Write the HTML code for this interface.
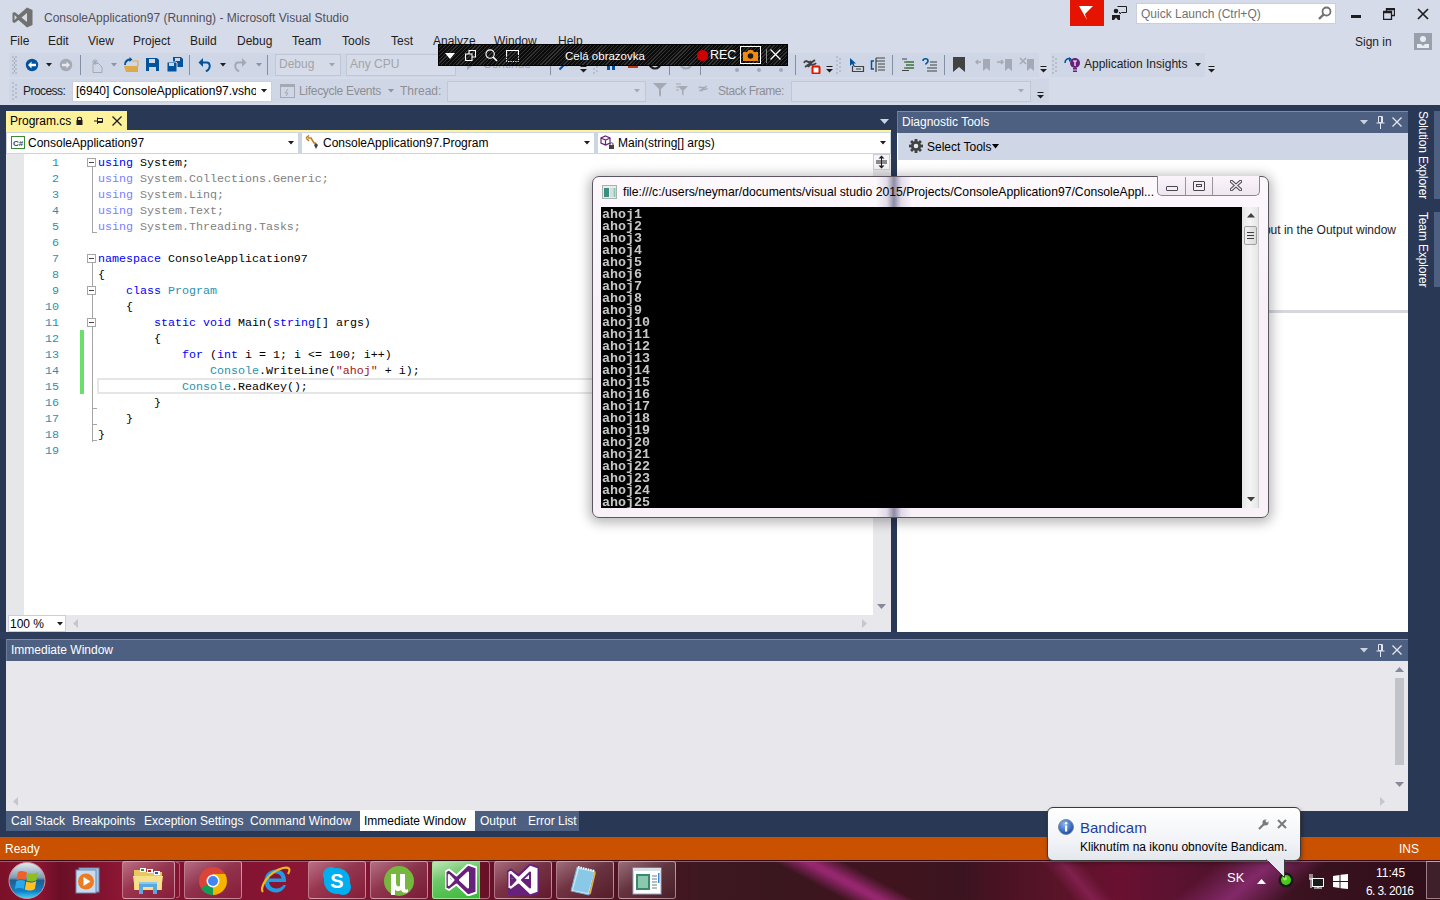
<!DOCTYPE html>
<html><head><meta charset="utf-8">
<style>
*{box-sizing:border-box;margin:0;padding:0}
html,body{width:1440px;height:900px;overflow:hidden;background:#293955;font-family:"Liberation Sans",sans-serif;font-size:12px;color:#1E1E1E;position:relative}
.a{position:absolute}
.t{position:absolute;white-space:pre;line-height:14px}
.m{position:absolute;white-space:pre;font-family:"Liberation Mono",monospace;font-size:11.67px;line-height:16px}
</style></head><body>


<!-- TOP CHROME -->
<div class="a" style="left:0;top:0;width:1440px;height:105px;background:#D6DBE9"></div>
<svg class="a" style="left:12px;top:7px" width="21" height="21" viewBox="0 0 21 21"><path fill="#717171" fill-rule="evenodd" d="M15 0.5 L20.5 3 V18 L15 20.5 L6.5 13 L2.5 16 L0.5 15 V6 L2.5 5 L6.5 8 Z M2.5 8 V13 L5 10.5 Z M15 6 V15 L9.5 10.5 Z"/></svg>
<div class="t" style="left:44px;top:11px;color:#50505C">ConsoleApplication97 (Running) - Microsoft Visual Studio</div>
<!-- red flag -->
<div class="a" style="left:1070px;top:0;width:34px;height:26px;background:#E51400"></div>
<svg class="a" style="left:1079px;top:6px" width="16" height="15" viewBox="0 0 16 15"><path fill="#fff" d="M0 0 H14 L6 8 L8 14 Z"/></svg>
<!-- feedback -->
<svg class="a" style="left:1112px;top:5px" width="16" height="16" viewBox="0 0 16 16"><circle cx="4" cy="6" r="2.3" fill="#1E1E1E"/><path d="M0 15 V10 H8 V15 H6 L4 12.5 L2 15Z" fill="#1E1E1E"/><path d="M5.5 1.5 H14.5 V7.5 H9.5 L8 9 V7.5 H7" fill="none" stroke="#1E1E1E" stroke-width="1"/></svg>
<!-- quick launch -->
<div class="a" style="left:1136px;top:3px;width:200px;height:21px;background:#fff;border:1px solid #CCCEDB"></div>
<div class="t" style="left:1141px;top:7px;color:#717171">Quick Launch (Ctrl+Q)</div>
<svg class="a" style="left:1318px;top:6px" width="14" height="14" viewBox="0 0 14 14"><circle cx="8.5" cy="5.5" r="4" fill="none" stroke="#717171" stroke-width="1.8"/><path d="M5.5 8.5 L1 13" stroke="#717171" stroke-width="2.4"/></svg>
<!-- window buttons -->
<div class="a" style="left:1351px;top:15px;width:10px;height:3px;background:#1E1E1E"></div>
<svg class="a" style="left:1383px;top:8px" width="12" height="12" viewBox="0 0 12 12"><path d="M3.5 3.5 V0.5 H11.5 V7.5 H8.5 M0.5 3.5 H8.5 V11.5 H0.5 Z M3.5 1.5 H11 M0.5 4.5 H8.5" fill="none" stroke="#1E1E1E" stroke-width="1.3"/></svg>
<svg class="a" style="left:1417px;top:8px" width="12" height="12" viewBox="0 0 12 12"><path d="M1 1 L11 11 M11 1 L1 11" stroke="#1E1E1E" stroke-width="1.7"/></svg>
<div class="t" style="left:1355px;top:35px;color:#1E1E1E">Sign in</div>
<div class="a" style="left:1414px;top:33px;width:18px;height:17px;background:#98A0AC"></div>
<svg class="a" style="left:1414px;top:33px" width="18" height="17" viewBox="0 0 18 17"><circle cx="9" cy="6" r="3" fill="#E9ECF2"/><path d="M3 15 V11 H7 L9 13 L11 11 H15 V15Z" fill="#E9ECF2"/></svg>
<!-- menu -->
<div class="t" style="left:10px;top:34px">File</div>
<div class="t" style="left:48px;top:34px">Edit</div>
<div class="t" style="left:88px;top:34px">View</div>
<div class="t" style="left:133px;top:34px">Project</div>
<div class="t" style="left:190px;top:34px">Build</div>
<div class="t" style="left:237px;top:34px">Debug</div>
<div class="t" style="left:292px;top:34px">Team</div>
<div class="t" style="left:342px;top:34px">Tools</div>
<div class="t" style="left:391px;top:34px">Test</div>
<div class="t" style="left:433px;top:34px">Analyze</div>
<div class="t" style="left:494px;top:34px">Window</div>
<div class="t" style="left:558px;top:34px">Help</div>
<!-- toolbar row 1 -->
<div class="a" style="left:9px;top:53px;width:1030px;height:24px;background:#CFD6E5"></div>
<div class="a" style="left:1051px;top:53px;width:154px;height:24px;background:#CFD6E5"></div>
<!-- toolbar row 2 -->
<div class="a" style="left:9px;top:79px;width:1040px;height:24px;background:#CFD6E5"></div>

<svg class="a" style="left:12px;top:56px" width="6" height="18"><g fill="#8D93A3"><circle cx="1" cy="1" r=".7"/><circle cx="4" cy="1" r=".7"/><circle cx="2.5" cy="3" r=".7"/><circle cx="1" cy="5" r=".7"/><circle cx="4" cy="5" r=".7"/><circle cx="2.5" cy="7" r=".7"/><circle cx="1" cy="9" r=".7"/><circle cx="4" cy="9" r=".7"/><circle cx="2.5" cy="11" r=".7"/><circle cx="1" cy="13" r=".7"/><circle cx="4" cy="13" r=".7"/><circle cx="2.5" cy="15" r=".7"/><circle cx="1" cy="17" r=".7"/><circle cx="4" cy="17" r=".7"/></g></svg>
<svg class="a" style="left:25px;top:58px" width="14" height="14" viewBox="0 0 14 14"><circle cx="7" cy="7" r="6.2" fill="#00539C"/><path d="M3 7 L6.5 3.5 V5.8 H11 V8.2 H6.5 V10.5Z" fill="#fff"/></svg>
<svg class="a" style="left:46px;top:63px" width="6" height="4"><path d="M0 0H6L3 3.5Z" fill="#1E1E1E"/></svg>
<svg class="a" style="left:59px;top:58px" width="14" height="14" viewBox="0 0 14 14"><circle cx="7" cy="7" r="6.2" fill="#A5A9B3"/><path d="M11 7 L7.5 3.5 V5.8 H3 V8.2 H7.5 V10.5Z" fill="#E6E8EE"/></svg>
<div class="a" style="left:80px;top:55px;width:1px;height:20px;background:#8591A2"></div>
<svg class="a" style="left:90px;top:57px" width="14" height="16" viewBox="0 0 14 16"><path d="M3 6.5 H8.5 L12 10 V15.5 H3Z M5 8 V2 M2 5 H8 M3 3 L7 7 M7 3 L3 7" fill="none" stroke="#A5A9B3" stroke-width="1"/></svg>
<svg class="a" style="left:111px;top:63px" width="6" height="4"><path d="M0 0H6L3 3.5Z" fill="#8D93A3"/></svg>
<svg class="a" style="left:123px;top:57px" width="16" height="16" viewBox="0 0 16 16"><path d="M1 9 H15 V15 H3 Z" fill="#DCA94B"/><path d="M9 4 H15 V9" fill="none" stroke="#DCA94B" stroke-width="1.2"/><path d="M2 8 C2 4 4 2.5 8 2.5" fill="none" stroke="#00539C" stroke-width="1.8"/><path d="M6.5 0 L9.5 2.5 L6.5 5Z" fill="#00539C"/></svg>
<svg class="a" style="left:146px;top:58px" width="13" height="13" viewBox="0 0 13 13"><path d="M0 0 H11 L13 2 V13 H0Z" fill="#00539C"/><rect x="3" y="1" width="6" height="4" fill="#CFD6E5"/><rect x="3" y="9" width="7" height="4" fill="#CFD6E5"/></svg>
<svg class="a" style="left:167px;top:57px" width="16" height="15" viewBox="0 0 16 15"><path d="M6 0 H14 L16 2 V10 H6Z" fill="#00539C"/><rect x="8" y="1" width="5" height="3" fill="#CFD6E5"/><path d="M0 5 H9 L10 6 V15 H0Z" fill="#00539C" stroke="#CFD6E5" stroke-width="1"/><rect x="2" y="6" width="5" height="3" fill="#CFD6E5"/></svg>
<div class="a" style="left:189px;top:55px;width:1px;height:20px;background:#8591A2"></div>
<svg class="a" style="left:198px;top:57px" width="14" height="15" viewBox="0 0 14 15"><path d="M4.5 5.5 H9 C12 5.5 12.5 10 10.5 12.5 L8 14.5" fill="none" stroke="#00539C" stroke-width="2"/><path d="M0.5 5.5 L5 1 V10Z" fill="#00539C"/></svg>
<svg class="a" style="left:220px;top:63px" width="6" height="4"><path d="M0 0H6L3 3.5Z" fill="#1E1E1E"/></svg>
<svg class="a" style="left:233px;top:57px" width="14" height="15" viewBox="0 0 14 15"><path d="M9.5 5.5 H5 C2 5.5 1.5 10 3.5 12.5 L6 14.5" fill="none" stroke="#A5A9B3" stroke-width="2"/><path d="M13.5 5.5 L9 1 V10Z" fill="#A5A9B3"/></svg>
<svg class="a" style="left:256px;top:63px" width="6" height="4"><path d="M0 0H6L3 3.5Z" fill="#8D93A3"/></svg>
<div class="a" style="left:267px;top:55px;width:1px;height:20px;background:#8591A2"></div>
<div class="a" style="left:275px;top:54px;width:66px;height:22px;border:1px solid #C0C7D5;background:#D6DBE9"></div>
<div class="t" style="left:279px;top:57px;color:#A2A4A5">Debug</div>
<svg class="a" style="left:329px;top:63px" width="6" height="4"><path d="M0 0H6L3 3.5Z" fill="#A2A4A5"/></svg>
<div class="a" style="left:346px;top:54px;width:110px;height:22px;border:1px solid #C0C7D5;background:#D6DBE9"></div>
<div class="t" style="left:350px;top:57px;color:#A2A4A5">Any CPU</div>


<!-- continue (partially hidden) -->
<svg class="a" style="left:466px;top:57px" width="10" height="14"><path d="M1 1 L9 7 L1 13Z" fill="#A5A9B3"/></svg>
<div class="t" style="left:483px;top:57px;color:#A2A4A5">Continue</div>
<svg class="a" style="left:538px;top:63px" width="6" height="4"><path d="M0 0H6L3 3.5Z" fill="#A2A4A5"/></svg>
<div class="a" style="left:550px;top:55px;width:1px;height:20px;background:#8591A2"></div>
<svg class="a" style="left:558px;top:57px" width="16" height="14" viewBox="0 0 16 14"><circle cx="9" cy="5" r="3.5" fill="none" stroke="#00539C" stroke-width="1.5"/><path d="M6.5 7.5 L1.5 12.5" stroke="#00539C" stroke-width="2"/><rect x="11" y="4" width="5" height="2" fill="#DCA94B"/></svg>
<svg class="a" style="left:580px;top:66px" width="7" height="7"><rect x="0.5" y="0" width="6" height="1" fill="#1E1E1E"/><path d="M0 3H7L3.5 6.5Z" fill="#1E1E1E"/></svg>
<svg class="a" style="left:593px;top:56px" width="6" height="18"><g fill="#8D93A3"><circle cx="1" cy="1" r=".7"/><circle cx="4" cy="3" r=".7"/><circle cx="1" cy="5" r=".7"/><circle cx="4" cy="7" r=".7"/><circle cx="1" cy="9" r=".7"/><circle cx="4" cy="11" r=".7"/><circle cx="1" cy="13" r=".7"/><circle cx="4" cy="15" r=".7"/><circle cx="1" cy="17" r=".7"/></g></svg>
<div class="a" style="left:607px;top:58px;width:3px;height:12px;background:#00539C"></div>
<div class="a" style="left:612px;top:58px;width:3px;height:12px;background:#00539C"></div>
<div class="a" style="left:628px;top:58px;width:10px;height:10px;background:#C1341F"></div>
<svg class="a" style="left:648px;top:56px" width="14" height="14"><circle cx="7" cy="7" r="5.5" fill="none" stroke="#1E1E1E" stroke-width="2.2"/></svg>
<div class="a" style="left:669px;top:55px;width:1px;height:20px;background:#8591A2"></div>
<svg class="a" style="left:679px;top:56px" width="14" height="14"><circle cx="7" cy="7" r="5.5" fill="none" stroke="#A5A9B3" stroke-width="2.2"/></svg>
<div class="a" style="left:700px;top:55px;width:1px;height:20px;background:#8591A2"></div>
<div class="a" style="left:735px;top:68px;width:4px;height:4px;border-radius:2px;background:#A5A9B3"></div>
<div class="a" style="left:757px;top:68px;width:4px;height:4px;border-radius:2px;background:#A5A9B3"></div>
<div class="a" style="left:779px;top:68px;width:4px;height:4px;border-radius:2px;background:#A5A9B3"></div>
<div class="a" style="left:795px;top:55px;width:1px;height:20px;background:#8591A2"></div>
<svg class="a" style="left:803px;top:57px" width="18" height="17" viewBox="0 0 18 17"><path d="M1 6 C3 1 6 8 8 4 M2 10 L12 3 M5 10 C8 5 10 10 13 6" fill="none" stroke="#424242" stroke-width="2"/><rect x="9.5" y="9.5" width="7" height="7" rx="1" fill="#fff" stroke="#E51400" stroke-width="2"/></svg>
<svg class="a" style="left:826px;top:66px" width="7" height="7"><rect x="0.5" y="0" width="6" height="1" fill="#1E1E1E"/><path d="M0 3H7L3.5 6.5Z" fill="#1E1E1E"/></svg>
<svg class="a" style="left:836px;top:56px" width="6" height="18"><g fill="#8D93A3"><circle cx="1" cy="1" r=".7"/><circle cx="4" cy="3" r=".7"/><circle cx="1" cy="5" r=".7"/><circle cx="4" cy="7" r=".7"/><circle cx="1" cy="9" r=".7"/><circle cx="4" cy="11" r=".7"/><circle cx="1" cy="13" r=".7"/><circle cx="4" cy="15" r=".7"/><circle cx="1" cy="17" r=".7"/></g></svg>
<svg class="a" style="left:849px;top:57px" width="16" height="16" viewBox="0 0 16 16"><path d="M1 1 V9 L3 7 L5 10 L6 9.5 L4.5 6.5 H7Z" fill="#00539C"/><path d="M5.5 9.5 H14.5 V14.5 H3.5 V9" fill="none" stroke="#424242" stroke-width="1.2"/><rect x="7" y="11.5" width="5" height="1" fill="#424242"/></svg>
<svg class="a" style="left:870px;top:57px" width="16" height="16" viewBox="0 0 16 16"><path d="M4 4 H1.5 V12 H4" fill="none" stroke="#00539C" stroke-width="1.5"/><path d="M6 1 H15 M6 4 H15 M8 7 H15 M8 10 H15 M8 13 H15 M6 1 V15" stroke="#424242" stroke-width="1.2"/></svg>
<div class="a" style="left:892px;top:55px;width:1px;height:20px;background:#8591A2"></div>
<svg class="a" style="left:901px;top:58px" width="14" height="13" viewBox="0 0 14 13"><path d="M1 1 H6 M3 4 H13 M5 7 H13 M3 10 H13 M1 12.5 H8" stroke="#424242" stroke-width="1.2"/><path d="M5 4 H13 M5 7 H13 M5 10 H13" stroke="#388A34" stroke-width="1.2"/></svg>
<svg class="a" style="left:922px;top:57px" width="16" height="15" viewBox="0 0 16 15"><path d="M1 4 C1 1 6 1 6 4 C6 6 4 6 3.5 7.5" fill="none" stroke="#00539C" stroke-width="1.6"/><path d="M8 5 H15 M8 8 H15 M5 11 H15 M5 14 H15" stroke="#424242" stroke-width="1.2"/></svg>
<div class="a" style="left:944px;top:55px;width:1px;height:20px;background:#8591A2"></div>
<svg class="a" style="left:953px;top:57px" width="12" height="15"><path d="M0 0 H12 V15 L6 10 L0 15Z" fill="#424242"/></svg>
<svg class="a" style="left:975px;top:57px" width="16" height="15"><path d="M8 2 H15 V14 L11.5 11 L8 14Z" fill="#A5A9B3"/><path d="M1 5 H6 M3 3 L1 5 L3 7" fill="none" stroke="#A5A9B3" stroke-width="1.5"/></svg>
<svg class="a" style="left:997px;top:57px" width="16" height="15"><path d="M8 2 H15 V14 L11.5 11 L8 14Z" fill="#A5A9B3"/><path d="M0 5 H6 M4 3 L6 5 L4 7" fill="none" stroke="#A5A9B3" stroke-width="1.5"/></svg>
<svg class="a" style="left:1019px;top:57px" width="16" height="15"><path d="M8 2 H15 V14 L11.5 11 L8 14Z" fill="#A5A9B3"/><path d="M1 1 L7 7 M7 1 L1 7" fill="none" stroke="#A5A9B3" stroke-width="1.5"/></svg>
<svg class="a" style="left:1040px;top:66px" width="7" height="7"><rect x="0.5" y="0" width="6" height="1" fill="#1E1E1E"/><path d="M0 3H7L3.5 6.5Z" fill="#1E1E1E"/></svg>
<svg class="a" style="left:1052px;top:56px" width="6" height="18"><g fill="#8D93A3"><circle cx="1" cy="1" r=".7"/><circle cx="4" cy="3" r=".7"/><circle cx="1" cy="5" r=".7"/><circle cx="4" cy="7" r=".7"/><circle cx="1" cy="9" r=".7"/><circle cx="4" cy="11" r=".7"/><circle cx="1" cy="13" r=".7"/><circle cx="4" cy="15" r=".7"/><circle cx="1" cy="17" r=".7"/></g></svg>
<svg class="a" style="left:1064px;top:57px" width="17" height="16" viewBox="0 0 17 16"><path d="M1 6 C1 2 4 1 7 2" fill="none" stroke="#00539C" stroke-width="1.6"/><path d="M5 0 L8 2.5 L5 5Z" fill="#00539C"/><circle cx="11" cy="6" r="5" fill="#68217A"/><rect x="9" y="11" width="4" height="1.5" fill="#68217A"/><rect x="9" y="13.5" width="4" height="1.5" fill="#68217A"/><path d="M9 4 H13 M11 4 V9" stroke="#fff" stroke-width="1.2"/></svg>
<div class="t" style="left:1084px;top:57px">Application Insights</div>
<svg class="a" style="left:1195px;top:63px" width="6" height="4"><path d="M0 0H6L3 3.5Z" fill="#1E1E1E"/></svg>
<svg class="a" style="left:1208px;top:66px" width="7" height="7"><rect x="0.5" y="0" width="6" height="1" fill="#1E1E1E"/><path d="M0 3H7L3.5 6.5Z" fill="#1E1E1E"/></svg>

<svg class="a" style="left:12px;top:82px" width="6" height="18"><g fill="#8D93A3"><circle cx="1" cy="1" r=".7"/><circle cx="4" cy="3" r=".7"/><circle cx="1" cy="5" r=".7"/><circle cx="4" cy="7" r=".7"/><circle cx="1" cy="9" r=".7"/><circle cx="4" cy="11" r=".7"/><circle cx="1" cy="13" r=".7"/><circle cx="4" cy="15" r=".7"/><circle cx="1" cy="17" r=".7"/></g></svg>
<div class="t" style="left:23px;top:84px;letter-spacing:-0.55px">Process:</div>
<div class="a" style="left:72px;top:81px;width:200px;height:21px;background:#fff;border:1px solid #CCCEDB"></div>
<div class="t" style="left:76px;top:84px;color:#000">[6940] ConsoleApplication97.vsho</div>
<div class="a" style="left:256px;top:82px;width:15px;height:19px;background:#fff"></div>
<svg class="a" style="left:261px;top:89px" width="6" height="4"><path d="M0 0H6L3 3.5Z" fill="#1E1E1E"/></svg>
<svg class="a" style="left:280px;top:84px" width="15" height="14" viewBox="0 0 15 14"><rect x="0.5" y="0.5" width="14" height="13" fill="none" stroke="#A5A9B3"/><rect x="0.5" y="0.5" width="14" height="2.5" fill="#A5A9B3"/><path d="M8 5 L5 9 H8 L6 12" fill="none" stroke="#A5A9B3" stroke-width="1"/></svg>
<div class="t" style="left:299px;top:84px;color:#8D8F96;letter-spacing:-0.3px">Lifecycle Events</div>
<svg class="a" style="left:388px;top:89px" width="6" height="4"><path d="M0 0H6L3 3.5Z" fill="#8D93A3"/></svg>
<div class="t" style="left:400px;top:84px;color:#8D8F96">Thread:</div>
<div class="a" style="left:447px;top:81px;width:199px;height:21px;border:1px solid #C0C7D5;background:#D6DBE9"></div>
<svg class="a" style="left:634px;top:89px" width="6" height="4"><path d="M0 0H6L3 3.5Z" fill="#A5A9B3"/></svg>
<svg class="a" style="left:653px;top:83px" width="14" height="15"><path d="M0 0 H14 L8 6 V14 L6 12 V6Z" fill="#A5A9B3"/></svg>
<svg class="a" style="left:675px;top:83px" width="14" height="15"><path d="M3 3 H13 L8.5 7.5 V13 L7 11 V7.5Z" fill="#A5A9B3"/><path d="M1 1 H6 M1 4 H4 M1 7 H4" stroke="#A5A9B3" stroke-width="1.2"/></svg>
<svg class="a" style="left:697px;top:84px" width="15" height="12" viewBox="0 0 18 17"><path d="M1 6 C3 1 6 8 8 4 M2 10 L12 3 M5 10 C8 5 10 10 13 6" fill="none" stroke="#A5A9B3" stroke-width="2"/></svg>
<div class="t" style="left:718px;top:84px;color:#8D8F96;letter-spacing:-0.45px">Stack Frame:</div>
<div class="a" style="left:791px;top:81px;width:240px;height:21px;border:1px solid #C0C7D5;background:#D6DBE9"></div>
<svg class="a" style="left:1018px;top:89px" width="6" height="4"><path d="M0 0H6L3 3.5Z" fill="#A5A9B3"/></svg>
<svg class="a" style="left:1037px;top:92px" width="7" height="7"><rect x="0.5" y="0" width="6" height="1" fill="#1E1E1E"/><path d="M0 3H7L3.5 6.5Z" fill="#1E1E1E"/></svg>

<div class="a" style="left:6px;top:111px;width:121px;height:21px;background:#FFF29D"></div>
<div class="a" style="left:6px;top:130px;width:885px;height:2px;background:#FFF29D"></div>
<div class="t" style="left:10px;top:114px;color:#000">Program.cs</div>
<svg class="a" style="left:76px;top:116px" width="7" height="9" viewBox="0 0 7 9"><path d="M1.5 4 V2.5 C1.5 0.8 5.5 0.8 5.5 2.5 V4" fill="none" stroke="#1E1E1E" stroke-width="1.2"/><rect x="0.5" y="4" width="6" height="5" fill="#1E1E1E"/></svg>
<svg class="a" style="left:94px;top:116px" width="9" height="9" viewBox="0 0 9 9"><path d="M0 5 H3 M3.5 1.5 V8 M3.5 2.5 H8.5 V6.5 H3.5 M3.5 5.5 H8.5" fill="none" stroke="#1E1E1E" stroke-width="1"/></svg>
<svg class="a" style="left:112px;top:116px" width="10" height="10" viewBox="0 0 10 10"><path d="M0.5 0.5 L9.5 9.5 M9.5 0.5 L0.5 9.5" stroke="#1E1E1E" stroke-width="1.3"/></svg>
<svg class="a" style="left:880px;top:119px" width="9" height="5"><path d="M0 0H9L4.5 5Z" fill="#CED4DD"/></svg>
<div class="a" style="left:6px;top:132px;width:885px;height:22px;background:#CCD5E4"></div>
<div class="a" style="left:7px;top:133px;width:291px;height:20px;background:#fff"></div>
<div class="a" style="left:302px;top:133px;width:292px;height:20px;background:#fff"></div>
<div class="a" style="left:598px;top:133px;width:292px;height:20px;background:#fff"></div>
<svg class="a" style="left:11px;top:136px" width="14" height="13" viewBox="0 0 14 13"><rect x="0.5" y="0.5" width="13" height="12" fill="#fff" stroke="#388A34"/><text x="2" y="10" font-family="Liberation Sans" font-size="8" font-weight="bold" fill="#424242">C#</text></svg>
<div class="t" style="left:28px;top:136px;color:#000">ConsoleApplication97</div>
<svg class="a" style="left:288px;top:141px" width="6" height="4"><path d="M0 0H6L3 3.5Z" fill="#1E1E1E"/></svg>
<svg class="a" style="left:305px;top:135px" width="14" height="15" viewBox="0 0 14 15"><path d="M1 3 L4 0.5 M1 3 L4 6 M3 3 H6 L9 8 H11" fill="none" stroke="#C27D1A" stroke-width="1.6"/><path d="M9 10 L11 8 L13 10 L11 14Z" fill="#424242"/></svg>
<div class="t" style="left:323px;top:136px;color:#000">ConsoleApplication97.Program</div>
<svg class="a" style="left:584px;top:141px" width="6" height="4"><path d="M0 0H6L3 3.5Z" fill="#1E1E1E"/></svg>
<svg class="a" style="left:600px;top:135px" width="15" height="15" viewBox="0 0 15 15"><path d="M5.5 1 L10 3 V8 L5.5 10 L1 8 V3Z M1 3 L5.5 5 L10 3 M5.5 5 V10" fill="none" stroke="#68217A" stroke-width="1.2"/><rect x="9" y="10" width="5" height="4" fill="#424242"/><path d="M10 10 V8.8 C10 7.5 13 7.5 13 8.8 V10" fill="none" stroke="#424242"/></svg>
<div class="t" style="left:618px;top:136px;color:#000">Main(string[] args)</div>
<svg class="a" style="left:880px;top:141px" width="6" height="4"><path d="M0 0H6L3 3.5Z" fill="#1E1E1E"/></svg>
<div class="a" style="left:6px;top:154px;width:885px;height:478px;background:#E8E8EC"></div>
<div class="a" style="left:7px;top:154px;width:866px;height:461px;background:#fff"></div>
<div class="a" style="left:7px;top:154px;width:17px;height:461px;background:#E6E7E8"></div>
<div class="a" style="left:873px;top:154px;width:17px;height:16px;background:#F5F6F9;border:1px solid #C9CED8"></div>
<svg class="a" style="left:875px;top:155px" width="13" height="14" viewBox="0 0 13 14"><path d="M6.5 1 V13 M1 6 H12 M1 8 H12" stroke="#1E1E1E" stroke-width="1"/><path d="M3.5 3.5 L6.5 0.5 L9.5 3.5Z M3.5 10.5 L6.5 13.5 L9.5 10.5Z" fill="#1E1E1E"/></svg>
<svg class="a" style="left:877px;top:604px" width="9" height="5"><path d="M0 0H9L4.5 5Z" fill="#868999"/></svg>
<div class="a" style="left:8px;top:615px;width:58px;height:17px;background:#fff;border:1px solid #CCCEDB"></div>
<div class="t" style="left:10px;top:617px;color:#000">100 %</div>
<svg class="a" style="left:57px;top:622px" width="6" height="4"><path d="M0 0H6L3 3.5Z" fill="#1E1E1E"/></svg>
<svg class="a" style="left:73px;top:619px" width="5" height="9"><path d="M5 0V9L0 4.5Z" fill="#C6C6D0"/></svg>
<svg class="a" style="left:862px;top:619px" width="5" height="9"><path d="M0 0V9L5 4.5Z" fill="#C6C6D0"/></svg>
<div class="a" style="left:97px;top:378px;width:776px;height:16px;border:2px solid #E6E6E9"></div>
<div class="a" style="left:80px;top:330px;width:4px;height:64px;background:#6CDE6C"></div>
<div class="m" style="left:52px;top:155px;color:#2B91AF">1</div>
<div class="m" style="left:98px;top:155px"><span style="color:#0000FF">using</span><span style="color:#000000"> System;</span></div>
<div class="m" style="left:52px;top:171px;color:#2B91AF">2</div>
<div class="m" style="left:98px;top:171px"><span style="color:#8080FF">using</span><span style="color:#808080"> System.Collections.Generic;</span></div>
<div class="m" style="left:52px;top:187px;color:#2B91AF">3</div>
<div class="m" style="left:98px;top:187px"><span style="color:#8080FF">using</span><span style="color:#808080"> System.Linq;</span></div>
<div class="m" style="left:52px;top:203px;color:#2B91AF">4</div>
<div class="m" style="left:98px;top:203px"><span style="color:#8080FF">using</span><span style="color:#808080"> System.Text;</span></div>
<div class="m" style="left:52px;top:219px;color:#2B91AF">5</div>
<div class="m" style="left:98px;top:219px"><span style="color:#8080FF">using</span><span style="color:#808080"> System.Threading.Tasks;</span></div>
<div class="m" style="left:52px;top:235px;color:#2B91AF">6</div>
<div class="m" style="left:52px;top:251px;color:#2B91AF">7</div>
<div class="m" style="left:98px;top:251px"><span style="color:#0000FF">namespace</span><span style="color:#000000"> ConsoleApplication97</span></div>
<div class="m" style="left:52px;top:267px;color:#2B91AF">8</div>
<div class="m" style="left:98px;top:267px"><span style="color:#000000">{</span></div>
<div class="m" style="left:52px;top:283px;color:#2B91AF">9</div>
<div class="m" style="left:98px;top:283px"><span style="color:#000000">    </span><span style="color:#0000FF">class</span><span style="color:#000000"> </span><span style="color:#2B91AF">Program</span></div>
<div class="m" style="left:45px;top:299px;color:#2B91AF">10</div>
<div class="m" style="left:98px;top:299px"><span style="color:#000000">    {</span></div>
<div class="m" style="left:45px;top:315px;color:#2B91AF">11</div>
<div class="m" style="left:98px;top:315px"><span style="color:#000000">        </span><span style="color:#0000FF">static</span><span style="color:#000000"> </span><span style="color:#0000FF">void</span><span style="color:#000000"> Main(</span><span style="color:#0000FF">string</span><span style="color:#000000">[] args)</span></div>
<div class="m" style="left:45px;top:331px;color:#2B91AF">12</div>
<div class="m" style="left:98px;top:331px"><span style="color:#000000">        {</span></div>
<div class="m" style="left:45px;top:347px;color:#2B91AF">13</div>
<div class="m" style="left:98px;top:347px"><span style="color:#000000">            </span><span style="color:#0000FF">for</span><span style="color:#000000"> (</span><span style="color:#0000FF">int</span><span style="color:#000000"> i = 1; i &lt;= 100; i++)</span></div>
<div class="m" style="left:45px;top:363px;color:#2B91AF">14</div>
<div class="m" style="left:98px;top:363px"><span style="color:#000000">                </span><span style="color:#2B91AF">Console</span><span style="color:#000000">.WriteLine(</span><span style="color:#A31515">&quot;ahoj&quot;</span><span style="color:#000000"> + i);</span></div>
<div class="m" style="left:45px;top:379px;color:#2B91AF">15</div>
<div class="m" style="left:98px;top:379px"><span style="color:#000000">            </span><span style="color:#2B91AF">Console</span><span style="color:#000000">.ReadKey();</span></div>
<div class="m" style="left:45px;top:395px;color:#2B91AF">16</div>
<div class="m" style="left:98px;top:395px"><span style="color:#000000">        }</span></div>
<div class="m" style="left:45px;top:411px;color:#2B91AF">17</div>
<div class="m" style="left:98px;top:411px"><span style="color:#000000">    }</span></div>
<div class="m" style="left:45px;top:427px;color:#2B91AF">18</div>
<div class="m" style="left:98px;top:427px"><span style="color:#000000">}</span></div>
<div class="m" style="left:45px;top:443px;color:#2B91AF">19</div>
<div class="a" style="left:92px;top:167px;width:1px;height:66px;background:#A5A5A5"></div>
<div class="a" style="left:92px;top:232px;width:5px;height:1px;background:#A5A5A5"></div>
<div class="a" style="left:92px;top:263px;width:1px;height:179px;background:#A5A5A5"></div>
<div class="a" style="left:92px;top:408px;width:5px;height:1px;background:#A5A5A5"></div>
<div class="a" style="left:92px;top:424px;width:5px;height:1px;background:#A5A5A5"></div>
<div class="a" style="left:92px;top:440px;width:5px;height:1px;background:#A5A5A5"></div>
<svg class="a" style="left:87px;top:158px" width="9" height="9"><rect x="0.5" y="0.5" width="8" height="8" fill="#fff" stroke="#A5A5A5"/><path d="M2 4.5H7" stroke="#424242"/></svg>
<svg class="a" style="left:87px;top:254px" width="9" height="9"><rect x="0.5" y="0.5" width="8" height="8" fill="#fff" stroke="#A5A5A5"/><path d="M2 4.5H7" stroke="#424242"/></svg>
<svg class="a" style="left:87px;top:286px" width="9" height="9"><rect x="0.5" y="0.5" width="8" height="8" fill="#fff" stroke="#A5A5A5"/><path d="M2 4.5H7" stroke="#424242"/></svg>
<svg class="a" style="left:87px;top:318px" width="9" height="9"><rect x="0.5" y="0.5" width="8" height="8" fill="#fff" stroke="#A5A5A5"/><path d="M2 4.5H7" stroke="#424242"/></svg>
<div class="a" style="left:897px;top:111px;width:511px;height:521px;background:#fff"></div>
<div class="a" style="left:897px;top:111px;width:511px;height:22px;background:#4D6082;border-top:1px solid #7B8AAA;border-left:1px solid #6C7C9D"></div>
<div class="t" style="left:902px;top:115px;color:#fff">Diagnostic Tools</div>
<svg class="a" style="left:1360px;top:120px" width="8" height="5"><path d="M0 0H8L4 4.5Z" fill="#CED4DD"/></svg>
<svg class="a" style="left:1376px;top:116px" width="9" height="13" viewBox="0 0 9 13"><path d="M2.5 0.5 H6.5 V6.5 H2.5Z M0.5 7 H8.5 M4.5 7 V13 M5.5 1 V6" fill="none" stroke="#E2E6EE" stroke-width="1"/></svg>
<svg class="a" style="left:1392px;top:117px" width="10" height="10" viewBox="0 0 10 10"><path d="M0.5 0.5 L9.5 9.5 M9.5 0.5 L0.5 9.5" stroke="#E2E6EE" stroke-width="1.3"/></svg>
<div class="a" style="left:898px;top:133px;width:510px;height:27px;background:#CFD6E5"></div>
<svg class="a" style="left:908px;top:138px" width="16" height="16" viewBox="0 0 16 16"><g fill="#424242"><rect x="6.6" y="1" width="2.8" height="4" transform="rotate(0 8 8)"/><rect x="6.6" y="1" width="2.8" height="4" transform="rotate(45 8 8)"/><rect x="6.6" y="1" width="2.8" height="4" transform="rotate(90 8 8)"/><rect x="6.6" y="1" width="2.8" height="4" transform="rotate(135 8 8)"/><rect x="6.6" y="1" width="2.8" height="4" transform="rotate(180 8 8)"/><rect x="6.6" y="1" width="2.8" height="4" transform="rotate(225 8 8)"/><rect x="6.6" y="1" width="2.8" height="4" transform="rotate(270 8 8)"/><rect x="6.6" y="1" width="2.8" height="4" transform="rotate(315 8 8)"/><circle cx="8" cy="8" r="5"/></g><circle cx="8" cy="8" r="2.3" fill="#E4E8F0"/></svg>
<div class="t" style="left:927px;top:140px;color:#000">Select Tools</div>
<svg class="a" style="left:992px;top:144px" width="7" height="5"><path d="M0 0H7L3.5 4.5Z" fill="#000"/></svg>
<div class="t" style="left:1200px;top:223px;color:#1E1E1E;width:196px;text-align:right">Debug output in the Output window</div>
<div class="a" style="left:898px;top:310px;width:510px;height:3px;background:#D6D7DC"></div>
<div class="a" style="left:1434px;top:111px;width:6px;height:88px;background:#4D6082"></div>
<div class="a" style="left:1434px;top:212px;width:6px;height:75px;background:#4D6082"></div>
<div class="t" style="left:1416px;top:111px;color:#fff;transform-origin:0 0;transform:translate(14px,0) rotate(90deg);letter-spacing:-0.2px">Solution Explorer</div>
<div class="t" style="left:1416px;top:212px;color:#fff;transform-origin:0 0;transform:translate(14px,0) rotate(90deg);letter-spacing:-0.15px">Team Explorer</div>
<div class="a" style="left:0;top:632px;width:1408px;height:7px;background:#2D3D5B"></div>
<div class="a" style="left:6px;top:639px;width:1402px;height:172px;background:#E8E8EC"></div>
<div class="a" style="left:6px;top:639px;width:1402px;height:22px;background:#4D6082;border-top:1px solid #7B8AAA;border-left:1px solid #6C7C9D"></div>
<div class="t" style="left:11px;top:643px;color:#fff">Immediate Window</div>
<svg class="a" style="left:1360px;top:648px" width="8" height="5"><path d="M0 0H8L4 4.5Z" fill="#CED4DD"/></svg>
<svg class="a" style="left:1376px;top:644px" width="9" height="13" viewBox="0 0 9 13"><path d="M2.5 0.5 H6.5 V6.5 H2.5Z M0.5 7 H8.5 M4.5 7 V13 M5.5 1 V6" fill="none" stroke="#E2E6EE" stroke-width="1"/></svg>
<svg class="a" style="left:1392px;top:645px" width="10" height="10" viewBox="0 0 10 10"><path d="M0.5 0.5 L9.5 9.5 M9.5 0.5 L0.5 9.5" stroke="#E2E6EE" stroke-width="1.3"/></svg>
<svg class="a" style="left:1395px;top:667px" width="9" height="5"><path d="M0 5H9L4.5 0Z" fill="#868999"/></svg>
<div class="a" style="left:1395px;top:678px;width:9px;height:87px;background:#C2C3C9"></div>
<svg class="a" style="left:1395px;top:782px" width="9" height="5"><path d="M0 0H9L4.5 5Z" fill="#868999"/></svg>
<svg class="a" style="left:13px;top:797px" width="5" height="9"><path d="M5 0V9L0 4.5Z" fill="#C6C6D0"/></svg>
<svg class="a" style="left:1380px;top:797px" width="5" height="9"><path d="M0 0V9L5 4.5Z" fill="#C6C6D0"/></svg>
<div class="a" style="left:6px;top:811px;width:573px;height:20px;background:#4D6082"></div>
<div class="a" style="left:360px;top:810px;width:115px;height:21px;background:#fff"></div>
<div class="t" style="left:11px;top:814px;color:#fff">Call Stack</div>
<div class="t" style="left:72px;top:814px;color:#fff">Breakpoints</div>
<div class="t" style="left:144px;top:814px;color:#fff">Exception Settings</div>
<div class="t" style="left:250px;top:814px;color:#fff">Command Window</div>
<div class="t" style="left:364px;top:814px;color:#000">Immediate Window</div>
<div class="t" style="left:480px;top:814px;color:#fff">Output</div>
<div class="t" style="left:528px;top:814px;color:#fff">Error List</div>
<div class="a" style="left:0;top:837px;width:1440px;height:23px;background:#CA5100"></div>
<div class="t" style="left:5px;top:842px;color:#fff">Ready</div>
<div class="t" style="left:1399px;top:842px;color:#fff">INS</div>
<div class="a" style="left:0;top:860px;width:1440px;height:40px;overflow:hidden;background:linear-gradient(90deg,#7A1028 0,#8A1432 40px,#6A0E26 60px,#8C1634 120px,#7E1230 200px,#8A1634 300px,#7A1430 400px,#6A1028 480px,#5A1224 560px,#4A1420 640px,#3E1820 700px,#3A161E 780px,#40141E 900px,#3A1420 960px,#4A1224 1000px,#5A1428 1060px,#6A1030 1120px,#5A1230 1180px,#3A1220 1300px,#2E0E18 1440px)"><div style="position:absolute;left:770px;top:0;width:70px;height:40px;transform-origin:0 0;transform:skewX(62deg);background:linear-gradient(90deg,rgba(160,40,120,0),rgba(165,42,125,.85) 45%,rgba(165,42,125,.85) 55%,rgba(160,40,120,0))"></div><div style="position:absolute;left:1220px;top:0;width:110px;height:40px;transform-origin:0 0;transform:skewX(-50deg);background:linear-gradient(90deg,rgba(140,40,110,0),rgba(140,45,115,.85) 50%,rgba(140,40,110,0))"></div><div style="position:absolute;left:1040px;top:0;width:40px;height:40px;transform-origin:0 0;transform:skewX(40deg);background:linear-gradient(90deg,rgba(150,40,100,0),rgba(150,40,100,.6) 50%,rgba(150,40,100,0))"></div></div>
<div class="a" style="left:0;top:860px;width:1440px;height:1px;background:#3A0A14"></div><div class="a" style="left:0;top:861px;width:1440px;height:1px;background:#B87888;opacity:.7"></div>
<svg class="a" style="left:7px;top:861px" width="40" height="39" viewBox="0 0 40 39"><defs><linearGradient id="orb" x1="0" y1="0" x2="0" y2="1"><stop offset="0" stop-color="#E4ECF0"/><stop offset=".42" stop-color="#7E9CB0"/><stop offset=".5" stop-color="#1E5E90"/><stop offset=".8" stop-color="#1280C8"/><stop offset="1" stop-color="#40D8F8"/></linearGradient></defs><circle cx="20" cy="19.5" r="18" fill="url(#orb)" stroke="#D89098" stroke-width="1"/><path d="M11 11 C14 9 17 10 20 11.5 L18.5 19 C15.5 17.5 12.5 17.5 9.5 19Z" fill="#F0602A"/><path d="M21 12 C24 13.5 27 13.5 31 11 L29.5 19 C26 21 23 21 19.5 19.5Z" fill="#8CC020"/><path d="M9.3 20 C12.5 18.5 15.5 18.5 18.3 20 L16.8 28 C13.8 26.5 10.8 26.5 7.8 28Z" fill="#2AA8E8"/><path d="M19.3 20.5 C22.5 22 25.5 22 29.3 20 L27.8 28 C24.5 30 21.5 30 17.8 28.5Z" fill="#FFC020"/></svg>
<svg class="a" style="left:74px;top:867px" width="28" height="28" viewBox="0 0 28 28"><rect x="5" y="1" width="20" height="24" fill="#A8C8E8" stroke="#6A8AB0"/><rect x="2" y="3" width="20" height="23" fill="#C8DCF0" stroke="#6A8AB0"/><circle cx="12" cy="14.5" r="8" fill="#F07A20"/><path d="M9.5 10 L16.5 14.5 L9.5 19Z" fill="#fff"/></svg>
<div class="a" style="left:122px;top:861px;width:53px;height:38px;border:1px solid rgba(255,220,230,.45);border-radius:3px;background:linear-gradient(150deg,rgba(255,235,240,.42) 0%,rgba(255,255,255,.14) 45%,rgba(255,255,255,.04) 100%);"></div>
<div class="a" style="left:184px;top:861px;width:58px;height:38px;border:1px solid rgba(255,220,230,.45);border-radius:3px;background:linear-gradient(150deg,rgba(255,235,240,.42) 0%,rgba(255,255,255,.14) 45%,rgba(255,255,255,.04) 100%);"></div>
<div class="a" style="left:308px;top:861px;width:58px;height:38px;border:1px solid rgba(255,220,230,.45);border-radius:3px;background:linear-gradient(150deg,rgba(255,235,240,.42) 0%,rgba(255,255,255,.14) 45%,rgba(255,255,255,.04) 100%);"></div>
<div class="a" style="left:370px;top:861px;width:58px;height:38px;border:1px solid rgba(255,220,230,.45);border-radius:3px;background:linear-gradient(150deg,rgba(255,235,240,.42) 0%,rgba(255,255,255,.14) 45%,rgba(255,255,255,.04) 100%);"></div>
<div class="a" style="left:494px;top:861px;width:58px;height:38px;border:1px solid rgba(255,220,230,.45);border-radius:3px;background:linear-gradient(150deg,rgba(255,235,240,.42) 0%,rgba(255,255,255,.14) 45%,rgba(255,255,255,.04) 100%);"></div>
<div class="a" style="left:556px;top:861px;width:58px;height:38px;border:1px solid rgba(255,220,230,.45);border-radius:3px;background:linear-gradient(150deg,rgba(255,235,240,.42) 0%,rgba(255,255,255,.14) 45%,rgba(255,255,255,.04) 100%);"></div>
<div class="a" style="left:618px;top:861px;width:58px;height:38px;border:1px solid rgba(255,220,230,.45);border-radius:3px;background:linear-gradient(150deg,rgba(255,235,240,.42) 0%,rgba(255,255,255,.14) 45%,rgba(255,255,255,.04) 100%);"></div>
<div class="a" style="left:176px;top:862px;width:4px;height:36px;border:1px solid rgba(255,220,230,.35);border-left:none;border-radius:0 3px 3px 0"></div>
<svg class="a" style="left:132px;top:866px" width="32" height="30" viewBox="0 0 32 30"><path d="M2 4 H12 L14 6 H30 V24 H2Z" fill="#E8C860"/><rect x="8" y="2" width="6" height="4" fill="#fff"/><rect x="9" y="3" width="3" height="2" fill="#2A9A3A"/><rect x="15" y="3" width="6" height="4" fill="#fff"/><rect x="16" y="4" width="3" height="2" fill="#C02020"/><rect x="22" y="5" width="6" height="4" fill="#fff"/><rect x="23" y="6" width="3" height="2" fill="#2060C0"/><path d="M1 10 H31 L29 24 H3Z" fill="#F8E08A"/><path d="M7 16 H25 V28 H21 V21 H11 V28 H7Z" fill="#5AA8E0"/><rect x="7" y="16" width="18" height="2" fill="#8AC8F0"/></svg>
<svg class="a" style="left:198px;top:866px" width="30" height="30" viewBox="0 0 30 30"><circle cx="15" cy="15" r="14" fill="#DB4437"/><path d="M15 15 L2.9 22 A14 14 0 0 0 15 29 L22 17Z" fill="#0F9D58"/><path d="M15 15 L15 29 A14 14 0 0 0 27.1 8 L15 8Z" fill="#F4B400"/><path d="M15 15 L27.1 8 A14 14 0 0 0 15 1Z" fill="none"/><circle cx="15" cy="15" r="6.5" fill="#fff"/><circle cx="15" cy="15" r="5" fill="#4285F4"/></svg>
<svg class="a" style="left:259px;top:864px" width="32" height="32" viewBox="0 0 32 32"><path d="M27 18 H10 C10.5 22.5 14 24.5 17.5 24.5 C20.5 24.5 23 23 24.5 21 H27 C25 26 21 28.5 17 28.5 C10 28.5 5.5 23.5 5.5 17 C5.5 10.5 10.5 5.5 17 5.5 C23.5 5.5 27.5 10.5 27 18 Z M10.2 14.5 H22.5 C22 11 19.5 9.5 16.5 9.5 C13.5 9.5 11 11 10.2 14.5Z" fill="#1F9CE4" fill-rule="evenodd"/><path d="M4 28 C0 24 9 8 24 4 C30 2.5 32 5 29 10" fill="none" stroke="#F2B71A" stroke-width="2.2"/></svg>
<svg class="a" style="left:321px;top:865px" width="32" height="32" viewBox="0 0 32 32"><circle cx="10" cy="10" r="8" fill="#00AFF0"/><circle cx="22" cy="22" r="8" fill="#00AFF0"/><circle cx="16" cy="16" r="13" fill="#00AFF0"/><text x="16" y="23" text-anchor="middle" font-family="Liberation Sans" font-weight="bold" font-size="20" fill="#fff">S</text></svg>
<svg class="a" style="left:383px;top:865px" width="32" height="32" viewBox="0 0 32 32"><circle cx="16" cy="16" r="15" fill="#76B83F"/><path d="M8 9 H13 V18 C13 21 15 22 17 21 V9 H22 V23 C22 25 24 25 25 24 V27 C21 29 19 27 18 25 C16 27 12 26 12 24 V30 H8Z" fill="#fff"/></svg>
<div class="a" style="left:432px;top:861px;width:48px;height:38px;border-radius:3px 0 0 3px;background:linear-gradient(160deg,#C8E8C0 0%,#6CC86A 40%,#34B834 100%);box-shadow:inset 0 0 0 1px #50F050"></div>
<div class="a" style="left:432px;top:861px;width:58px;height:38px;border:1px solid rgba(255,220,230,.45);border-radius:3px"></div>
<svg class="a" style="left:445px;top:865px" width="32" height="31" viewBox="0 0 32 31"><path d="M22 1 L31 5 V26 L22 30 L10 19 L4 24 L1 22 V9 L4 7 L10 12Z" fill="#fff"/><path d="M22.5 2.8 L29.5 6 V25 L22.5 28.2 L10 17 L4 21.6 L2.5 20.8 V10.2 L4 9.4 L10 14 Z M4 12 V19 L7.5 15.5Z M22.5 9 V22 L14 15.5Z" fill="#68217A" fill-rule="evenodd"/></svg>
<svg class="a" style="left:507px;top:865px" width="32" height="31" viewBox="0 0 32 31"><path d="M22 1 L31 5 V26 L22 30 L10 19 L4 24 L1 22 V9 L4 7 L10 12Z" fill="#fff"/><path d="M22.5 2.8 L29.5 6 V25 L22.5 28.2 L10 17 L4 21.6 L2.5 20.8 V10.2 L4 9.4 L10 14 Z M4 12 V19 L7.5 15.5Z M22.5 9 V22 L14 15.5Z" fill="#68217A" fill-rule="evenodd"/></svg>
<svg class="a" style="left:567px;top:865px" width="32" height="32" viewBox="0 0 32 32"><path d="M10 2 L28 6 L22 30 L4 26Z" fill="#C8E4F4" stroke="#7AA8C8"/><path d="M12 4 L27 7 L21 28 L6 25Z" fill="#8AC8E8"/><path d="M11 2 L28 6" stroke="#fff" stroke-width="2" stroke-dasharray="1.5 1"/><path d="M27 7 L28 8 L23 29" stroke="#E8B040" stroke-width="1.5" fill="none"/></svg>
<svg class="a" style="left:631px;top:866px" width="32" height="30" viewBox="0 0 32 30"><rect x="2" y="2" width="28" height="26" fill="#fff" stroke="#9AA8B8"/><rect x="2" y="2" width="28" height="3" fill="#D8E0EA"/><rect x="5" y="8" width="14" height="16" fill="#3A8A6A"/><rect x="7" y="10" width="10" height="12" fill="#8AC8B0"/><path d="M21 10 H26 M21 13 H26 M21 16 H26 M21 19 H26 M21 22 H26" stroke="#6A7A8A"/><rect x="27" y="7" width="1.5" height="10" fill="#3A8ADA"/></svg>
<div class="t" style="left:1227px;top:871px;color:#fff;font-size:13px">SK</div>
<svg class="a" style="left:1257px;top:879px" width="9" height="5"><path d="M0 5H9L4.5 0Z" fill="#fff"/></svg>
<svg class="a" style="left:1278px;top:872px" width="16" height="16"><circle cx="8" cy="8" r="7.5" fill="#1A1A1A"/><circle cx="8" cy="8" r="5" fill="#4ACA18"/><circle cx="7" cy="6.5" r="2" fill="#9AF060"/></svg>
<svg class="a" style="left:1308px;top:873px" width="16" height="16" viewBox="0 0 16 16"><rect x="4.5" y="5.5" width="11" height="8" fill="#1A1A1A" stroke="#fff"/><path d="M2 1 V6 M4 1 V6 M1 6 H5 M3 6 V15 M6 15 H14 M10 13.5 V15" stroke="#fff" stroke-width="1"/></svg>
<svg class="a" style="left:1333px;top:874px" width="15" height="15" viewBox="0 0 15 15"><path d="M0 2 L6.5 1 V7 H0Z M7.5 0.8 L15 0 V7 H7.5Z M0 8 H6.5 V14 L0 13Z M7.5 8 H15 V15 L7.5 14.2Z" fill="#fff"/></svg>
<div class="t" style="left:1376px;top:866px;color:#fff;font-size:12px">11:45</div>
<div class="t" style="left:1366px;top:884px;color:#fff;font-size:12px;letter-spacing:-0.6px">6. 3. 2016</div>
<div class="a" style="left:1426px;top:861px;width:14px;height:38px;border:1px solid rgba(255,220,230,.5);border-right:none;background:rgba(255,255,255,.08)"></div>
<svg class="a" style="left:445px;top:864px" width="32" height="32" viewBox="0 0 32 32"><path d="M23 0.5 L31.5 3.5 V28.5 L23 31.5 L11.5 20.5 L4 26 L0.5 24 V7.5 L4 5.5 L11.5 11.5 Z M3.8 11 V21 L8.5 16 Z M23 8.5 V23.5 L15 16 Z" fill="#68217A" fill-rule="evenodd" stroke="#fff" stroke-width="2" stroke-linejoin="round"/></svg>
<div class="a" style="left:508px;top:879px;width:30px;height:16px;background:#68217A"></div><svg class="a" style="left:507px;top:864px" width="32" height="32" viewBox="0 0 32 32"><path d="M23 0.5 L31.5 3.5 V28.5 L23 31.5 L11.5 20.5 L4 26 L0.5 24 V7.5 L4 5.5 L11.5 11.5 Z M3.8 11 V21 L8.5 16 Z M23 8.5 V23.5 L15 16 Z" fill="#fff" fill-rule="evenodd" stroke="#68217A" stroke-width="2" stroke-linejoin="round"/></svg>
<div class="a" style="left:592px;top:176px;width:677px;height:342px;border-radius:7px;box-shadow:0 2px 12px 3px rgba(0,0,0,.28)"></div>
<div class="a" style="left:592px;top:176px;width:677px;height:342px;border-radius:7px;border:1px solid #5A5560;background:linear-gradient(180deg,#FCF8FC,#F7F1F7 40%,#F8F2F8)"></div>
<div class="a" style="left:876px;top:177px;width:36px;height:30px;background:linear-gradient(90deg,rgba(150,140,180,0),rgba(150,140,180,.25) 30%,rgba(70,70,110,.6) 50%,rgba(150,140,180,.25) 70%,rgba(150,140,180,0))"></div>
<div class="a" style="left:876px;top:508px;width:36px;height:9px;background:linear-gradient(90deg,rgba(150,140,180,0),rgba(150,140,180,.25) 30%,rgba(70,70,110,.6) 50%,rgba(150,140,180,.25) 70%,rgba(150,140,180,0))"></div>
<svg class="a" style="left:602px;top:185px" width="15" height="14" viewBox="0 0 15 14"><rect x="0.5" y="0.5" width="14" height="13" fill="#E8ECEF" stroke="#A8B0B8"/><rect x="2" y="3" width="5" height="9" fill="#3E8E7E"/><rect x="8" y="3" width="3" height="9" fill="#D8DCE0"/><rect x="11.5" y="3" width="2" height="9" fill="#8ACAA0"/></svg>
<div class="t" style="left:623px;top:185px;color:#000;font-size:12.2px">file:///c:/users/neymar/documents/visual studio 2015/Projects/ConsoleApplication97/ConsoleAppl...</div>
<div class="a" style="left:1157px;top:176px;width:103px;height:20px;border:1px solid #8A8590;border-top:none;border-radius:0 0 5px 5px;background:linear-gradient(180deg,#FBF4FB,#EFE6EF)"></div>
<div class="a" style="left:1185px;top:177px;width:1px;height:18px;background:#9A959F"></div>
<div class="a" style="left:1212px;top:177px;width:1px;height:18px;background:#9A959F"></div>
<div class="a" style="left:1166px;top:186px;width:12px;height:5px;border:1px solid #4A4550;border-radius:1px;background:#F0F0F0"></div>
<div class="a" style="left:1193px;top:181px;width:12px;height:10px;border:1px solid #4A4550;border-radius:1px;background:#F0F0F0"></div>
<div class="a" style="left:1196px;top:184px;width:6px;height:3px;border:1px solid #4A4550"></div>
<svg class="a" style="left:1230px;top:180px" width="12" height="11" viewBox="0 0 12 11"><path d="M1.5 1.5 L10.5 9.5 M10.5 1.5 L1.5 9.5" stroke="#4A4550" stroke-width="3.4" stroke-linecap="round"/><path d="M1.5 1.5 L10.5 9.5 M10.5 1.5 L1.5 9.5" stroke="#F0F0F0" stroke-width="1.4" stroke-linecap="round"/></svg>
<div class="a" style="left:601px;top:207px;width:641px;height:301px;background:#000;overflow:hidden;will-change:transform"><div style="position:absolute;left:1px;top:1.5px;font-family:'Liberation Mono',monospace;font-weight:bold;font-size:13.33px;line-height:12px;color:#C8C8C8;white-space:pre">ahoj1</div><div style="position:absolute;left:1px;top:13.5px;font-family:'Liberation Mono',monospace;font-weight:bold;font-size:13.33px;line-height:12px;color:#C8C8C8;white-space:pre">ahoj2</div><div style="position:absolute;left:1px;top:25.5px;font-family:'Liberation Mono',monospace;font-weight:bold;font-size:13.33px;line-height:12px;color:#C8C8C8;white-space:pre">ahoj3</div><div style="position:absolute;left:1px;top:37.5px;font-family:'Liberation Mono',monospace;font-weight:bold;font-size:13.33px;line-height:12px;color:#C8C8C8;white-space:pre">ahoj4</div><div style="position:absolute;left:1px;top:49.5px;font-family:'Liberation Mono',monospace;font-weight:bold;font-size:13.33px;line-height:12px;color:#C8C8C8;white-space:pre">ahoj5</div><div style="position:absolute;left:1px;top:61.5px;font-family:'Liberation Mono',monospace;font-weight:bold;font-size:13.33px;line-height:12px;color:#C8C8C8;white-space:pre">ahoj6</div><div style="position:absolute;left:1px;top:73.5px;font-family:'Liberation Mono',monospace;font-weight:bold;font-size:13.33px;line-height:12px;color:#C8C8C8;white-space:pre">ahoj7</div><div style="position:absolute;left:1px;top:85.5px;font-family:'Liberation Mono',monospace;font-weight:bold;font-size:13.33px;line-height:12px;color:#C8C8C8;white-space:pre">ahoj8</div><div style="position:absolute;left:1px;top:97.5px;font-family:'Liberation Mono',monospace;font-weight:bold;font-size:13.33px;line-height:12px;color:#C8C8C8;white-space:pre">ahoj9</div><div style="position:absolute;left:1px;top:109.5px;font-family:'Liberation Mono',monospace;font-weight:bold;font-size:13.33px;line-height:12px;color:#C8C8C8;white-space:pre">ahoj10</div><div style="position:absolute;left:1px;top:121.5px;font-family:'Liberation Mono',monospace;font-weight:bold;font-size:13.33px;line-height:12px;color:#C8C8C8;white-space:pre">ahoj11</div><div style="position:absolute;left:1px;top:133.5px;font-family:'Liberation Mono',monospace;font-weight:bold;font-size:13.33px;line-height:12px;color:#C8C8C8;white-space:pre">ahoj12</div><div style="position:absolute;left:1px;top:145.5px;font-family:'Liberation Mono',monospace;font-weight:bold;font-size:13.33px;line-height:12px;color:#C8C8C8;white-space:pre">ahoj13</div><div style="position:absolute;left:1px;top:157.5px;font-family:'Liberation Mono',monospace;font-weight:bold;font-size:13.33px;line-height:12px;color:#C8C8C8;white-space:pre">ahoj14</div><div style="position:absolute;left:1px;top:169.5px;font-family:'Liberation Mono',monospace;font-weight:bold;font-size:13.33px;line-height:12px;color:#C8C8C8;white-space:pre">ahoj15</div><div style="position:absolute;left:1px;top:181.5px;font-family:'Liberation Mono',monospace;font-weight:bold;font-size:13.33px;line-height:12px;color:#C8C8C8;white-space:pre">ahoj16</div><div style="position:absolute;left:1px;top:193.5px;font-family:'Liberation Mono',monospace;font-weight:bold;font-size:13.33px;line-height:12px;color:#C8C8C8;white-space:pre">ahoj17</div><div style="position:absolute;left:1px;top:205.5px;font-family:'Liberation Mono',monospace;font-weight:bold;font-size:13.33px;line-height:12px;color:#C8C8C8;white-space:pre">ahoj18</div><div style="position:absolute;left:1px;top:217.5px;font-family:'Liberation Mono',monospace;font-weight:bold;font-size:13.33px;line-height:12px;color:#C8C8C8;white-space:pre">ahoj19</div><div style="position:absolute;left:1px;top:229.5px;font-family:'Liberation Mono',monospace;font-weight:bold;font-size:13.33px;line-height:12px;color:#C8C8C8;white-space:pre">ahoj20</div><div style="position:absolute;left:1px;top:241.5px;font-family:'Liberation Mono',monospace;font-weight:bold;font-size:13.33px;line-height:12px;color:#C8C8C8;white-space:pre">ahoj21</div><div style="position:absolute;left:1px;top:253.5px;font-family:'Liberation Mono',monospace;font-weight:bold;font-size:13.33px;line-height:12px;color:#C8C8C8;white-space:pre">ahoj22</div><div style="position:absolute;left:1px;top:265.5px;font-family:'Liberation Mono',monospace;font-weight:bold;font-size:13.33px;line-height:12px;color:#C8C8C8;white-space:pre">ahoj23</div><div style="position:absolute;left:1px;top:277.5px;font-family:'Liberation Mono',monospace;font-weight:bold;font-size:13.33px;line-height:12px;color:#C8C8C8;white-space:pre">ahoj24</div><div style="position:absolute;left:1px;top:289.5px;font-family:'Liberation Mono',monospace;font-weight:bold;font-size:13.33px;line-height:12px;color:#C8C8C8;white-space:pre">ahoj25</div></div>
<div class="a" style="left:1242px;top:207px;width:17px;height:301px;background:linear-gradient(90deg,#E6E6E6,#F4F4F4 50%,#E6E6E6);border-right:1px solid #D0D0D0"></div>
<svg class="a" style="left:1247px;top:213px" width="8" height="5"><path d="M0 4.5H8L4 0Z" fill="#404040"/></svg>
<div class="a" style="left:1244px;top:226px;width:13px;height:19px;border:1px solid #A0A0A0;border-radius:2px;background:linear-gradient(90deg,#F2F2F2,#DADADA)"></div>
<div class="a" style="left:1247px;top:232px;width:7px;height:1px;background:#404040"></div>
<div class="a" style="left:1247px;top:235px;width:7px;height:1px;background:#404040"></div>
<div class="a" style="left:1247px;top:238px;width:7px;height:1px;background:#404040"></div>
<svg class="a" style="left:1247px;top:497px" width="8" height="5"><path d="M0 0H8L4 4.5Z" fill="#404040"/></svg>
<div class="a" style="left:438px;top:44px;width:350px;height:22px;background:repeating-linear-gradient(135deg,#0C0C0C 0px,#0C0C0C 1.8px,#333333 1.8px,#333333 2.7px);border:1px solid #000"></div>
<svg class="a" style="left:445px;top:53px" width="10" height="6"><path d="M0 0H10L5 6Z" fill="#fff"/></svg>
<svg class="a" style="left:465px;top:50px" width="11" height="11" viewBox="0 0 11 11"><path d="M4 4 V0.5 H10.5 V7 H7 M0.5 4 H7 V10.5 H0.5Z" fill="none" stroke="#fff" stroke-width="1.1"/></svg>
<svg class="a" style="left:485px;top:49px" width="13" height="13" viewBox="0 0 14 14"><circle cx="5.5" cy="5.5" r="4.5" fill="none" stroke="#fff" stroke-width="1.2"/><path d="M8.5 8.5 L13 13" stroke="#fff" stroke-width="1.6"/></svg>
<svg class="a" style="left:506px;top:50px" width="13" height="12" viewBox="0 0 13 12"><path d="M0.5 11.5 V0.5 H12.5 V11.5 H0.5" fill="none" stroke="#fff" stroke-width="1" stroke-dasharray="1.2 1.2"/><path d="M0.5 6 V0.5 H12.5 V5" fill="none" stroke="#fff" stroke-width="1.2"/></svg>
<div class="t" style="left:565px;top:49px;color:#fff;font-size:11.5px">Celá obrazovka</div>
<div class="a" style="left:697px;top:50px;width:11px;height:11px;border-radius:50%;background:#D00000"></div>
<div class="t" style="left:710px;top:48px;color:#fff;font-size:12.5px">REC</div>
<div class="a" style="left:740px;top:46px;width:21px;height:18px;border:1px solid #fff"></div>
<svg class="a" style="left:743px;top:49px" width="15" height="12" viewBox="0 0 15 12"><path d="M0 3 H4 L5.5 1 H9.5 L11 3 H15 V12 H0Z" fill="#F08A10"/><circle cx="7.5" cy="7" r="2.8" fill="#1A1A1A"/></svg>
<div class="a" style="left:766px;top:49px;width:1px;height:14px;background:#888"></div>
<svg class="a" style="left:770px;top:49px" width="11" height="11"><path d="M0.5 0.5 L10.5 10.5 M10.5 0.5 L0.5 10.5" stroke="#fff" stroke-width="1.3"/></svg>
<div class="a" style="left:1047px;top:807px;width:254px;height:54px;border-radius:6px;border:1px solid #3A3A3A;background:linear-gradient(180deg,#FFFFFF,#F2F4F8 60%,#E4E8EE);box-shadow:1px 2px 4px rgba(0,0,0,.35)"></div>
<svg class="a" style="left:1266px;top:859px" width="24" height="20" viewBox="0 0 24 20"><path d="M0.5 0.5 L18.5 18.5 L18.5 0.5" fill="#E6EAF0" stroke="#3A3A3A"/><rect x="1.5" y="0" width="16" height="2" fill="#E6EAF0"/></svg>
<svg class="a" style="left:1058px;top:819px" width="16" height="16" viewBox="0 0 16 16"><defs><radialGradient id="ib" cx="40%" cy="30%" r="70%"><stop offset="0" stop-color="#8AB8F0"/><stop offset="1" stop-color="#1A4AA8"/></radialGradient></defs><circle cx="8" cy="8" r="7.5" fill="url(#ib)" stroke="#7A8A9A"/><rect x="7" y="6.5" width="2.2" height="6" fill="#fff"/><circle cx="8.1" cy="4.2" r="1.2" fill="#fff"/></svg>
<div class="t" style="left:1080px;top:819px;color:#1E3E9E;font-size:15px;line-height:18px">Bandicam</div>
<div class="t" style="left:1080px;top:839.5px;color:#000;font-size:12px">Kliknutím na ikonu obnovíte Bandicam.</div>
<svg class="a" style="left:1258px;top:819px" width="11" height="11" viewBox="0 0 11 11"><path d="M1 10 L6 5" stroke="#7A7A7A" stroke-width="2.2"/><circle cx="7.5" cy="3.5" r="3" fill="#7A7A7A"/><circle cx="9" cy="2" r="1.4" fill="#F4F6F8"/></svg>
<svg class="a" style="left:1277px;top:819px" width="10" height="10"><path d="M1 1 L9 9 M9 1 L1 9" stroke="#7A7A7A" stroke-width="2"/></svg>
</body></html>
